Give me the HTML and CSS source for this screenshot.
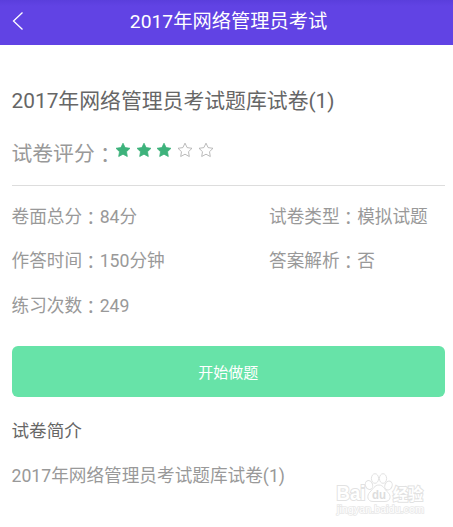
FILE: index.html
```html
<!DOCTYPE html>
<html lang="zh-CN">
<head>
    <meta charset="UTF-8">
    <meta name="viewport" content="width=device-width, initial-scale=1.0">
    <title>2017年网络管理员考试</title>
    <link rel="stylesheet" href="styles.css">
</head>
<body>
    <header class="topbar">
        <svg class="back" width="12" height="20" viewBox="0 0 12 20"><path d="M10.5 1.5L1.500 10l9 8.500"/></svg>
        <h1>2017年网络管理员考试</h1>
    </header>

    <main class="paper">
        <h2>2017年网络管理员考试题库试卷(1)</h2>

        <!-- Rating -->
        <div class="rating">
            <span>试卷评分<span class="colon" lang="zh-TW">：</span></span>
            <div class="stars">
                <svg class="star on" viewBox="0 0 16 16"><path d="M8 1.2l2.1 4.4 4.9.7-3.5 3.4.8 4.8L8 12.2l-4.3 2.3.8-4.8L1 6.3l4.9-.7z"/></svg>
                <svg class="star on" viewBox="0 0 16 16"><path d="M8 1.2l2.1 4.4 4.9.7-3.5 3.4.8 4.8L8 12.2l-4.3 2.3.8-4.8L1 6.3l4.9-.7z"/></svg>
                <svg class="star on" viewBox="0 0 16 16"><path d="M8 1.2l2.1 4.4 4.9.7-3.5 3.4.8 4.8L8 12.2l-4.3 2.3.8-4.8L1 6.3l4.9-.7z"/></svg>
                <svg class="star" viewBox="0 0 16 16"><path d="M8 1.2l2.1 4.4 4.9.7-3.5 3.4.8 4.8L8 12.2l-4.3 2.3.8-4.8L1 6.3l4.9-.7z"/></svg>
                <svg class="star" viewBox="0 0 16 16"><path d="M8 1.2l2.1 4.4 4.9.7-3.5 3.4.8 4.8L8 12.2l-4.3 2.3.8-4.8L1 6.3l4.9-.7z"/></svg>
            </div>
        </div>

        <!-- Paper details -->
        <div class="info">
            <p>卷面总分<span class="colon" lang="zh-TW">：</span>84分</p>
            <p>试卷类型<span class="colon" lang="zh-TW">：</span>模拟试题</p>
            <p>作答时间<span class="colon" lang="zh-TW">：</span>150分钟</p>
            <p>答案解析<span class="colon" lang="zh-TW">：</span>否</p>
            <p>练习次数<span class="colon" lang="zh-TW">：</span>249</p>
        </div>

        <button class="start-btn">开始做题</button>

        <h3>试卷简介</h3>
        <p class="intro">2017年网络管理员考试题库试卷(1)</p>
    </main>

    <!-- Watermark over the page -->
    <svg class="watermark" width="100" height="50" viewBox="0 0 100 50">
        <g class="mark">
            <text class="brand" x="3.500" y="30" textLength="29" lengthAdjust="spacingAndGlyphs">Bai</text>
            <ellipse cx="36" cy="15" rx="3.600" ry="4.600" transform="rotate(-20 36 15)"/>
            <ellipse cx="42" cy="8.500" rx="3.600" ry="4.800"/>
            <ellipse cx="50" cy="8.500" rx="3.600" ry="4.800"/>
            <ellipse cx="55.500" cy="15.500" rx="3.600" ry="4.600" transform="rotate(20 55.500 15.500)"/>
            <path d="M46 15c4.500 0 5.500 4.500 8.500 7 4 3 3.500 9.500-2.500 9.500h-12c-6 0-6.500-6-3-9.500 3-2.800 4.500-7 9-7z"/>
            <text class="du" x="39" y="29" textLength="14" lengthAdjust="spacingAndGlyphs">du</text>
            <text class="cn" x="60" y="30" textLength="30" lengthAdjust="spacingAndGlyphs">经验</text>
            <text class="site" x="4" y="42.500" textLength="87" lengthAdjust="spacingAndGlyphs">jingyan.baidu.com</text>
        </g>
    </svg>
</body>
</html>
```
FILE: styles.css
```css
/* Basic Reset */
* {
    box-sizing: border-box;
    margin: 0;
    padding: 0;
}

body {
    position: relative;
    height: 527px;
    overflow: hidden;
    font-family: Roboto, "Noto Sans CJK SC", sans-serif;
    font-size: 17.65px;
    background-color: #fff;
    color: #999;
}

h1, h2, h3 {
    font-weight: 400;
}

/* Purple title bar */
.topbar {
    display: grid;
    grid-template-columns: 28px 1fr 24px;
    align-items: center;
    height: 45px;
    padding-bottom: 3px;
    background: linear-gradient(#5a3edc, #6143e4 6px);
    color: #fff;
}

.topbar h1 {
    padding-top: 2px;
    font-size: 19.25px;
    line-height: 28px;
    text-align: center;
}

.back {
    margin-left: 12px;
    fill: none;
    stroke: #fff;
    stroke-width: 1.3;
}

.paper {
    padding: 40px 8px 0 11.5px;
}

h2 {
    font-size: 20.85px;
    line-height: 32px;
    color: #666;
}

.colon {
    font-family: "Noto Sans CJK TC", sans-serif;
    line-height: 0;
    vertical-align: -1.5px;
}

.rating {
    display: flex;
    height: 69px;
    padding-top: 22px;
    font-size: 20.8px;
    line-height: 30px;
    border-bottom: 1px solid #ddd;
}

.stars {
    display: flex;
    gap: 4.8px;
    margin-left: -0.7px;
    padding-top: 3px;
}

.star {
    width: 16px;
    height: 16px;
    fill: none;
    stroke: #aaa;
    stroke-width: 0.8;
}

.star.on {
    fill: #3db27b;
    stroke: #3db27b;
}

.info {
    display: grid;
    grid-template-columns: 257.5px 1fr;
    grid-auto-rows: 44.5px;
    padding-top: 8.5px;
    line-height: 44px;
}

.start-btn {
    display: block;
    width: 100%;
    height: 51px;
    margin-top: 18px;
    background-color: #67e3a8;
    color: #fff;
    border: none;
    border-radius: 6px;
    font-family: inherit;
    font-size: 15px;
}

h3 {
    margin-top: 20px;
    font-size: 17.6px;
    line-height: 28px;
    color: #666;
}

.intro {
    margin-top: 17px;
    line-height: 28px;
}

.watermark {
    position: absolute;
    left: 333px;
    top: 470px;
}

.mark {
    fill: #fff;
    stroke: #e2e2e2;
    stroke-width: 1;
    font-family: "Liberation Sans", "Noto Sans CJK SC", sans-serif;
    font-weight: 700;
}

.brand {
    font-size: 20px;
    stroke-width: 2;
    paint-order: stroke;
}

.du {
    font-size: 13px;
    fill: #ddd;
    stroke: none;
}

.cn {
    font-size: 16px;
    stroke-width: 2;
    paint-order: stroke;
}

.site {
    font-size: 10.5px;
    font-weight: 400;
    fill: #fff;
    stroke: #e8e8e8;
    stroke-width: 1.6;
    paint-order: stroke;
}
```
